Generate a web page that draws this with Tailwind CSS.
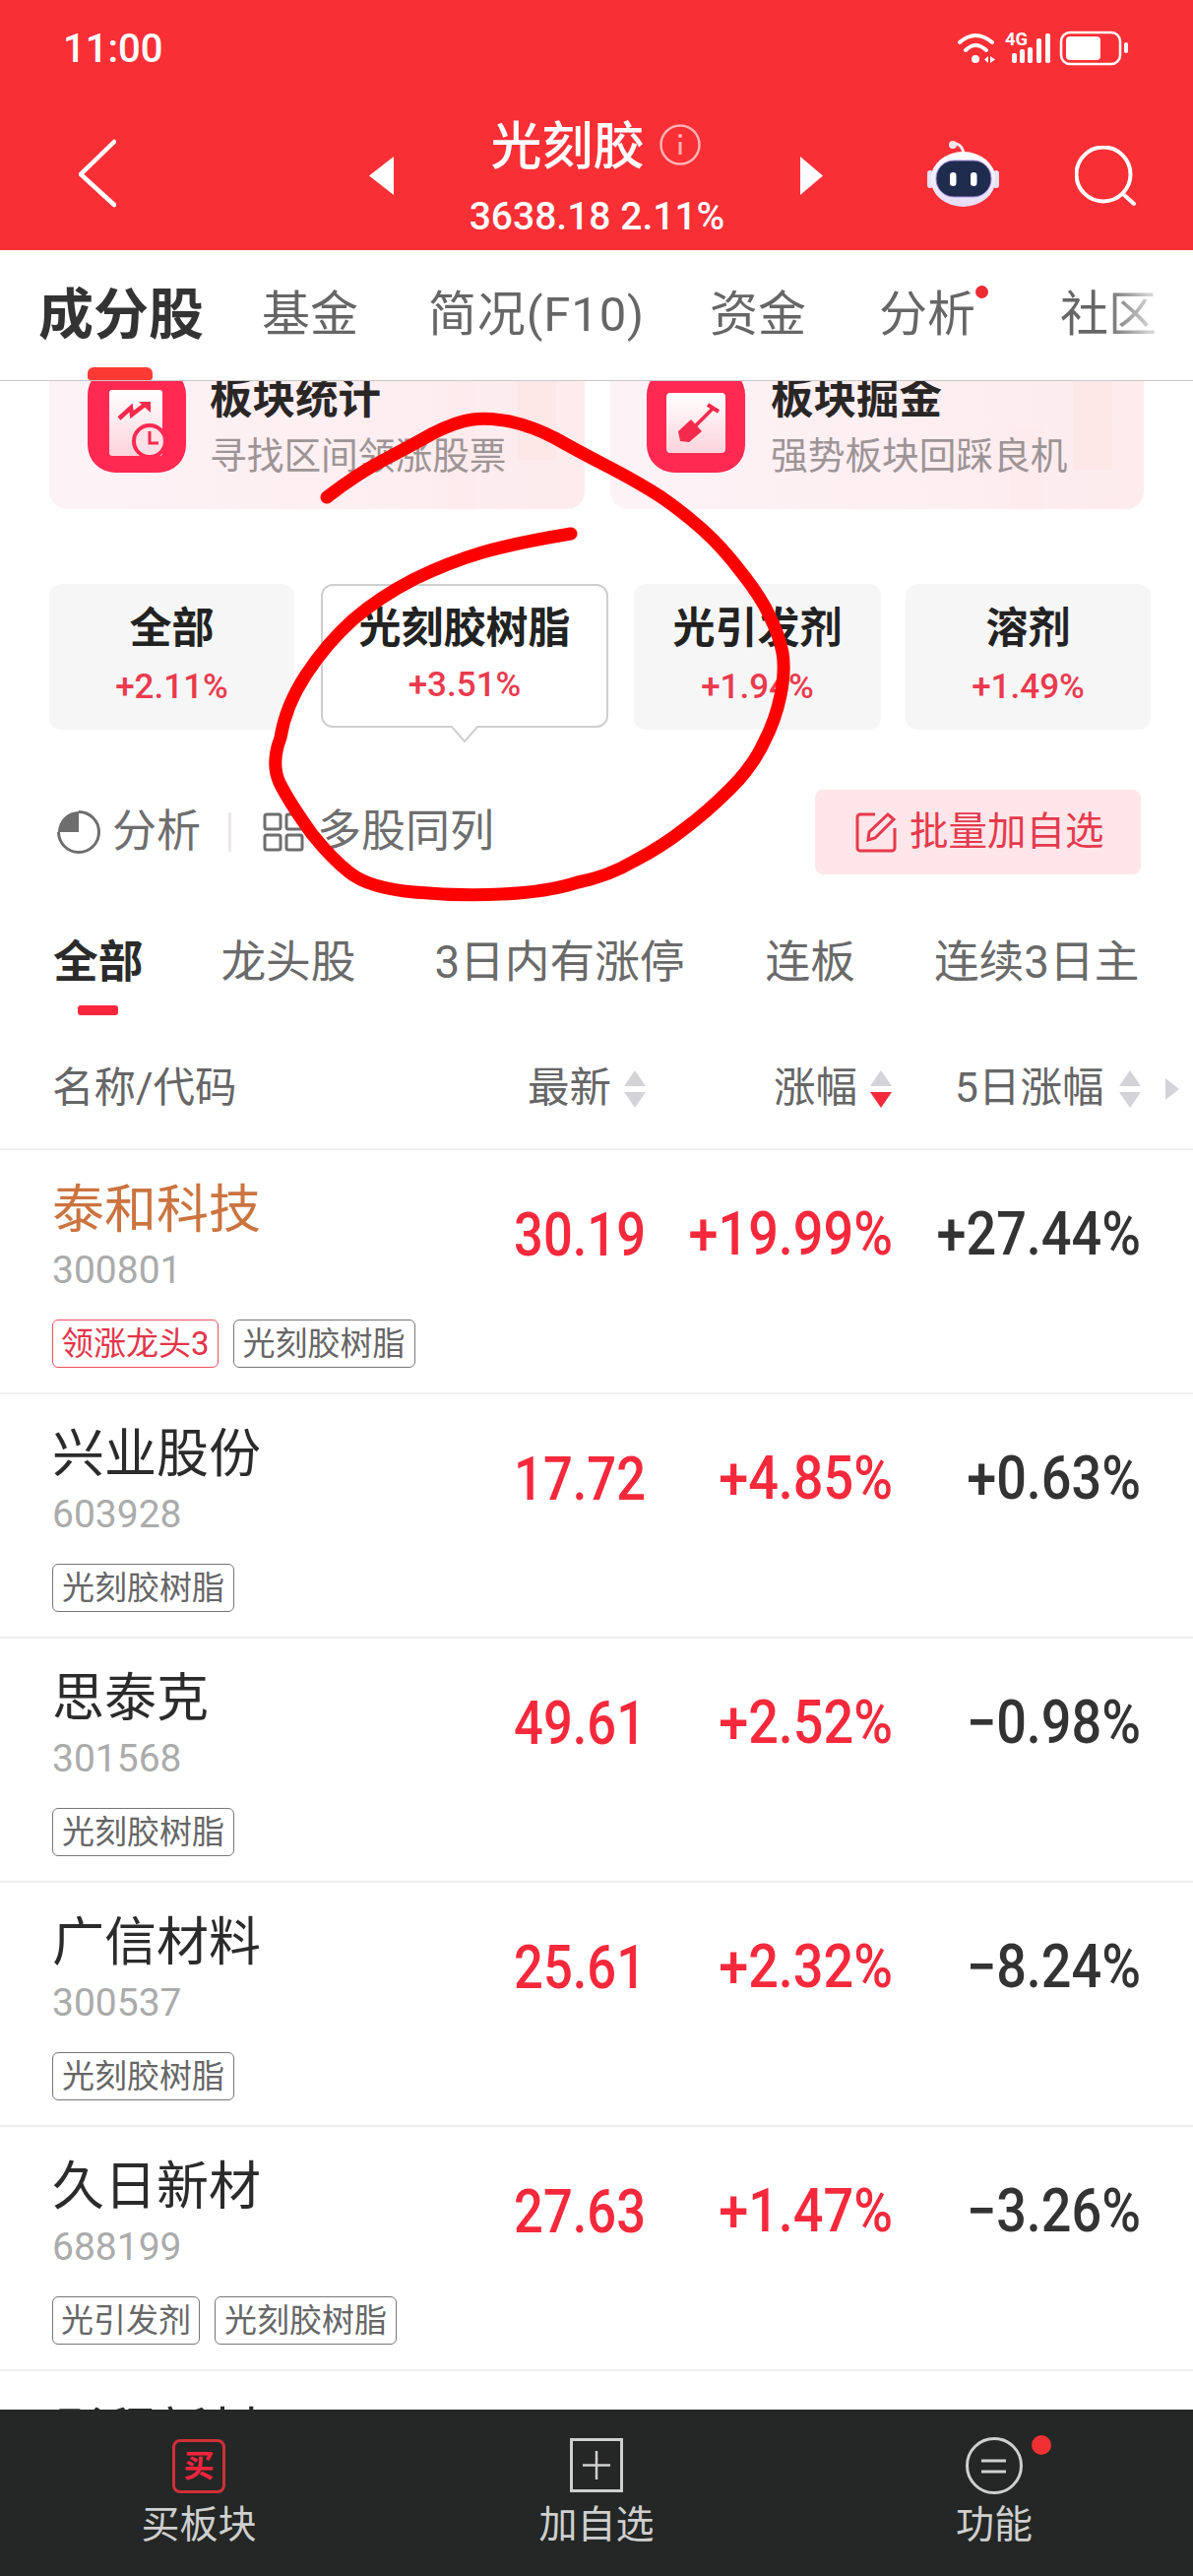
<!DOCTYPE html>
<html lang="zh-CN">
<head>
<meta charset="utf-8">
<script src="https://cdn.jsdelivr.net/npm/@tailwindcss/browser@4"></script>
<title>光刻胶</title>
</head>
<body>
<div class="relative w-[1212px] h-[2616px] overflow-hidden bg-white flex flex-col font-['Roboto','Noto_Sans_CJK_SC',sans-serif]">

  <!-- red header -->
  <header class="h-[254px] shrink-0 bg-[#f92f36] text-white">
    <div class="h-[100px] flex items-center pl-[64px]">
      <span class="text-[40px] font-medium leading-none">11:00</span>
      <svg class="ml-auto mr-[66px]" width="174" height="40" viewBox="0 0 174 40" fill="none">
        <path d="M3 13Q19 -1 36 13" stroke="#fff" stroke-width="4" stroke-linecap="round"/>
        <path d="M9 21Q19 11 30 21" stroke="#fff" stroke-width="4" stroke-linecap="round"/>
        <circle cx="19" cy="30" r="4" fill="#fff"/>
        <path d="M32 27v7l-4-3.500zM34 27v7l5-3.500z" fill="#fff"/>
        <text x="49" y="16" fill="#fff" font-size="18" font-weight="700" textLength="23" lengthAdjust="spacingAndGlyphs">4G</text>
        <rect x="56" y="24" width="5" height="10" rx="2" fill="#fff"/>
        <rect x="64" y="20" width="5" height="14" rx="2" fill="#fff"/>
        <rect x="72" y="18" width="5" height="16" rx="2" fill="#fff"/>
        <rect x="81" y="9" width="5" height="25" rx="2" fill="#fff"/>
        <rect x="90" y="4" width="5" height="30" rx="2" fill="#fff"/>
        <rect x="106" y="3" width="60" height="32" rx="9" stroke="#fff" stroke-width="2.500"/>
        <rect x="111" y="7" width="35" height="24" rx="4" fill="#fff"/>
        <rect x="170" y="13" width="4" height="11" rx="2" fill="#fff"/>
      </svg>
    </div>
    <div class="h-[154px] flex pl-[80px]">
      <svg class="mt-[41px]" width="38" height="70" viewBox="0 0 38 70" fill="none"><path d="M36 3L2 36L36 67" stroke="#fff" stroke-width="4.500" stroke-linecap="round" stroke-linejoin="miter"/></svg>
      <svg class="ml-[257px] mt-[59px]" width="25" height="39" viewBox="0 0 25 39"><path d="M0 19.500L25 0V39z" fill="#fff"/></svg>
      <div class="w-[413px] flex flex-col items-center">
        <div class="mt-[20px] h-[60px] flex items-center -ml-[3px]">
          <span class="text-[52px] leading-[60px] font-medium">光刻胶</span>
          <svg class="ml-[15px] -mt-[6px]" width="42" height="42" viewBox="0 0 42 42" fill="none">
            <circle cx="21" cy="21" r="19.500" stroke="#fdb3b5" stroke-width="2.500"/>
            <circle cx="21" cy="12" r="2" fill="#fdb3b5"/>
            <path d="M21 18v13" stroke="#fdb3b5" stroke-width="3"/>
          </svg>
        </div>
        <div class="mt-[18px] text-[39px] leading-[44px] font-medium">3638.18 2.11%</div>
      </div>
      <svg class="mt-[59px]" width="23" height="39" viewBox="0 0 23 39"><path d="M23 19.500L0 0V39z" fill="#fff"/></svg>
      <svg class="ml-[106px] mt-[43px]" width="73" height="67" viewBox="0 0 73 67" fill="none">
        <defs>
          <linearGradient id="rb" x1="0" y1="0" x2="0" y2="1"><stop offset="0" stop-color="#ffffff"/><stop offset="1" stop-color="#e6dcf5"/></linearGradient>
        </defs>
        <path d="M26 3C32 2 36 6 37 13" stroke="#f3e9ee" stroke-width="3"/>
        <circle cx="26" cy="4" r="4" fill="#f8e6e8"/>
        <rect x="0" y="30" width="6" height="18" rx="3" fill="#e6e1f3"/>
        <rect x="67" y="30" width="6" height="18" rx="3" fill="#e6e1f3"/>
        <ellipse cx="36.500" cy="39" rx="33" ry="28" fill="url(#rb)"/>
        <rect x="9" y="20" width="56" height="37" rx="18" fill="#1f2c4e" stroke="#a78bde" stroke-width="1"/>
        <rect x="23" y="32" width="6.500" height="14" rx="3.200" fill="#fff"/>
        <rect x="44" y="32" width="6.500" height="14" rx="3.200" fill="#fff"/>
      </svg>
      <svg class="ml-[77px] mt-[48px]" width="62" height="62" viewBox="0 0 62 62" fill="none">
        <circle cx="29" cy="29" r="27.500" stroke="#fff" stroke-width="4"/>
        <path d="M49 49L60 59" stroke="#fff" stroke-width="4" stroke-linecap="round"/>
      </svg>
    </div>
  </header>

  <!-- tabs -->
  <nav class="relative h-[133px] shrink-0 flex items-center border-b border-[#c9c6c6] pl-[39px] text-[49px] leading-[60px] text-[#666666] z-10 bg-white">
    <span class="text-[56px] font-bold text-[#333333]">成分股</span>
    <span class="ml-[59px]">基金</span>
    <span class="ml-[71px] tracking-[0.85px]">简况(F10)</span>
    <span class="ml-[66px]">资金</span>
    <span class="relative ml-[74px]">分析<i class="absolute -right-[13px] top-[0px] w-[13px] h-[13px] rounded-full bg-[#ee2c35]"></i></span>
    <span class="ml-[86px]">社区</span>
    <div class="absolute right-0 top-0 bottom-0 w-[90px] bg-gradient-to-r from-white/0 via-white/70 to-white"></div>
    <div class="absolute left-[89px] bottom-0 w-[66px] h-[13px] rounded-t-[6px] rounded-b-[3px] bg-[#fb3a33]"></div>
  </nav>

  <!-- scrolling content -->
  <main class="flex-1 overflow-hidden">
    <div class="flex gap-[26px] pl-[50px]">
      <div class="relative w-[544px] h-[130px] overflow-hidden rounded-b-[18px] bg-gradient-to-r from-[#fdf3f7] to-[#fdebed] flex pl-[39px]">
        <div class="absolute left-[405px] top-0 w-[28px] h-[130px] bg-[#feeaeb]/60"></div>
        <div class="absolute left-[475px] top-0 w-[40px] h-[80px] bg-[#fde4e2]/60"></div>
        <svg class="relative shrink-0 -mt-[14px]" width="100" height="107" viewBox="0 0 100 107" fill="none">
          <defs>
            <linearGradient id="i1" x1="0" y1="0" x2="0" y2="1"><stop offset="0" stop-color="#ffffff"/><stop offset="1" stop-color="#fcd3dc"/></linearGradient>
          </defs>
          <rect width="100" height="107" rx="28" fill="#ff2952"/>
          <rect x="22" y="23" width="54" height="67" rx="3" fill="url(#i1)"/>
          <path d="M32 52L44 41L45 48L58 38" stroke="#f42a4c" stroke-width="4.500"/>
          <path d="M52 35H64V46z" fill="#f42a4c"/>
          <circle cx="63" cy="75" r="16" fill="#fde1e6" stroke="#ff2952" stroke-width="4"/>
          <path d="M63 65V77H72" stroke="#f42a4c" stroke-width="3"/>
        </svg>
        <div class="relative ml-[24px] -mt-[6px] flex flex-col">
          <span class="text-[43.5px] leading-[50px] font-bold text-[#2a2626]">板块统计</span>
          <span class="mt-[10px] text-[37.7px] leading-[44px] text-[#9d9496]">寻找区间领涨股票</span>
        </div>
      </div>
      <div class="relative w-[542px] h-[130px] overflow-hidden rounded-b-[18px] bg-gradient-to-r from-[#fdf3f7] to-[#fdebed] flex pl-[37px]">
        <div class="absolute left-[406px] top-[46px] w-[34px] h-[84px] bg-[#feeaeb]/60"></div>
        <div class="absolute left-[470px] top-0 w-[40px] h-[90px] bg-[#fde4e2]/60"></div>
        <svg class="relative shrink-0 -mt-[14px]" width="100" height="107" viewBox="0 0 100 107" fill="none">
          <defs>
            <linearGradient id="i2" x1="0" y1="0" x2="0" y2="1"><stop offset="0" stop-color="#ffffff"/><stop offset="1" stop-color="#fcd3dc"/></linearGradient>
          </defs>
          <rect width="100" height="107" rx="28" fill="#ff2952"/>
          <rect x="20" y="26" width="60" height="61" rx="4" fill="url(#i2)"/>
          <path d="M47 62L68 41" stroke="#f42a4c" stroke-width="3.500"/>
          <path d="M62 38L73 45" stroke="#f42a4c" stroke-width="4"/>
          <path d="M32 65L45 53L56 65L43 76L34 75z" fill="#f42a4c"/>
        </svg>
        <div class="relative ml-[26px] -mt-[6px] flex flex-col">
          <span class="text-[43.5px] leading-[50px] font-bold text-[#2a2626]">板块掘金</span>
          <span class="mt-[10px] text-[37.7px] leading-[44px] text-[#9d9496]">强势板块回踩良机</span>
        </div>
      </div>
    </div>

    <!-- chips -->
    <div class="flex pl-[50px] mt-[76px]">
      <div class="w-[249px] h-[148px] rounded-[12px] bg-[#f6f6f6] flex flex-col items-center pt-[19px]">
        <span class="text-[43px] leading-[52px] font-bold text-[#222222]">全部</span>
        <span class="mt-[14px] text-[35px] leading-[40px] font-medium text-[#ea3a4e]">+2.11%</span>
      </div>
      <div class="relative ml-[27px] w-[292px] h-[146px] rounded-[12px] bg-white border-2 border-[#cfcfcf] flex flex-col items-center pt-[17px]">
        <span class="text-[43px] leading-[52px] font-bold text-[#222222]">光刻胶树脂</span>
        <span class="mt-[12px] text-[35px] leading-[40px] font-medium text-[#ea3a4e]">+3.51%</span>
        <svg class="absolute left-[130px] -bottom-[17px]" width="28" height="17" viewBox="0 0 28 17" fill="none"><path d="M0 0L14 16L28 0" fill="#fff" stroke="#cfcfcf" stroke-width="2"/></svg>
      </div>
      <div class="ml-[26px] w-[251px] h-[148px] rounded-[12px] bg-[#f6f6f6] flex flex-col items-center pt-[19px]">
        <span class="text-[43px] leading-[52px] font-bold text-[#222222]">光引发剂</span>
        <span class="mt-[14px] text-[35px] leading-[40px] font-medium text-[#ea3a4e]">+1.94%</span>
      </div>
      <div class="ml-[25px] w-[249px] h-[148px] rounded-[12px] bg-[#f6f6f6] flex flex-col items-center pt-[19px]">
        <span class="text-[43px] leading-[52px] font-bold text-[#222222]">溶剂</span>
        <span class="mt-[14px] text-[35px] leading-[40px] font-medium text-[#ea3a4e]">+1.49%</span>
      </div>
    </div>

    <!-- tools -->
    <div class="flex items-center mt-[61px] pl-[58px] h-[86px] text-[45px] text-[#6e6e6e]">
      <svg class="shrink-0" width="44" height="44" viewBox="0 0 44 44" fill="none">
        <path d="M22 1.500A20.500 20.500 0 1 1 1.500 22" stroke="#6e6e6e" stroke-width="3"/>
        <path d="M22 1V22H1A21 21 0 0 1 22 1z" fill="#6e6e6e"/>
      </svg>
      <span class="ml-[12px] leading-[56px] w-[90px]">分析</span>
      <i class="ml-[28px] w-[3px] h-[40px] bg-[#ebe7e7]"></i>
      <svg class="shrink-0 ml-[32px]" width="42" height="40" viewBox="0 0 42 40" fill="none" stroke="#6e6e6e" stroke-width="3">
        <rect x="2" y="2" width="16" height="15" rx="2"/>
        <rect x="24" y="2" width="16" height="15" rx="2"/>
        <rect x="2" y="23" width="16" height="15" rx="2"/>
        <rect x="24" y="23" width="16" height="15" rx="2"/>
      </svg>
      <span class="ml-[13px] leading-[56px] w-[180px]">多股同列</span>
      <div class="ml-[326px] w-[331px] h-[86px] rounded-[8px] bg-[#fee6ea] flex items-center pl-[41px] text-[#e63a4c]">
        <svg width="42" height="42" viewBox="0 0 42 42" fill="none" stroke="#e63a4c" stroke-width="3">
          <path d="M20 3H5a3 3 0 0 0-3 3V37a3 3 0 0 0 3 3H37a3 3 0 0 0 3-3V17"/>
          <path d="M13 29L14 21L33 3L39 8L20 27z"/>
        </svg>
        <span class="ml-[13px] text-[39.5px] leading-[50px]">批量加自选</span>
      </div>
    </div>

    <!-- sub tabs -->
    <div class="flex mt-[60px] pl-[54px] text-[45.7px] leading-[60px] text-[#6a6a6a]">
      <span class="font-bold text-[#2b2b2b]">全部</span>
      <span class="ml-[79px]">龙头股</span>
      <span class="ml-[80px]">3日内有涨停</span>
      <span class="ml-[82px]">连板</span>
      <span class="ml-[80px] whitespace-nowrap">连续3日主</span>
    </div>
    <div class="ml-[79px] mt-[13px] w-[41px] h-[10px] rounded-[3px] bg-[#f9263c]"></div>

    <!-- list head -->
    <div class="h-[137px] border-b-2 border-[#eeeeee] flex pt-[50px] pl-[53px] text-[42.5px] leading-[48px] text-[#666666]">
      <span class="w-[483px]">名称/代码</span>
      <span class="w-[98px]">最新</span>
      <svg width="22" height="38" viewBox="0 0 22 38" class="mt-[6px]"><path d="M11 0L22 16H0z" fill="#d4d4d8"/><path d="M0 22H22L11 38z" fill="#d4d4d8"/></svg>
      <span class="ml-[130px] w-[98px]">涨幅</span>
      <svg width="22" height="38" viewBox="0 0 22 38" class="mt-[6px]"><path d="M11 0L22 16H0z" fill="#d4d4d8"/><path d="M0 22H22L11 38z" fill="#f5293b"/></svg>
      <span class="ml-[64px] w-[167px]">5日涨幅</span>
      <svg width="22" height="38" viewBox="0 0 22 38" class="mt-[6px]"><path d="M11 0L22 16H0z" fill="#d4d4d8"/><path d="M0 22H22L11 38z" fill="#d4d4d8"/></svg>
      <svg width="14" height="22" viewBox="0 0 14 22" class="ml-[25px] mt-[14px]"><path d="M0 0L14 11L0 22z" fill="#d4d4d8"/></svg>
    </div>

    <!-- rows -->
    <div class="h-[248px] border-b-2 border-[#eeeeee] flex pl-[53px] pr-[53px]">
      <div class="flex-1 pt-[31px]">
        <div class="text-[53px] leading-[60px] text-[#cb7440]">泰和科技</div>
        <div class="mt-[11px] text-[39px] leading-[40px] text-[#ababab]">300801</div>
        <div class="mt-[30px] flex gap-[15px] text-[33px] leading-[47px]">
          <span class="h-[49px] px-[8px] border border-[#e9505f] rounded-[6px] text-[#e4344a] whitespace-nowrap">领涨龙头3</span>
          <span class="h-[49px] px-[9px] border border-[#777777] rounded-[6px] text-[#666666] whitespace-nowrap">光刻胶树脂</span>
        </div>
      </div>
      <div class="w-[150px] self-start mt-[56px] text-right text-[52.5px] leading-[60px] font-medium text-[#f5293b] scale-y-[1.15]">30.19</div>
      <div class="w-[251px] self-start mt-[56px] text-right text-[54px] leading-[60px] font-medium text-[#f5293b] scale-y-[1.12]">+19.99%</div>
      <div class="w-[252px] self-start mt-[56px] text-right text-[54px] leading-[60px] font-medium text-[#333333] scale-y-[1.12]">+27.44%</div>
    </div>
    <div class="h-[248px] border-b-2 border-[#eeeeee] flex pl-[53px] pr-[53px]">
      <div class="flex-1 pt-[31px]">
        <div class="text-[53px] leading-[60px] text-[#2b2b2b]">兴业股份</div>
        <div class="mt-[11px] text-[39px] leading-[40px] text-[#ababab]">603928</div>
        <div class="mt-[30px] flex gap-[15px] text-[33px] leading-[47px]">
          <span class="h-[49px] px-[9px] border border-[#777777] rounded-[6px] text-[#666666] whitespace-nowrap">光刻胶树脂</span>
        </div>
      </div>
      <div class="w-[150px] self-start mt-[56px] text-right text-[52.5px] leading-[60px] font-medium text-[#f5293b] scale-y-[1.15]">17.72</div>
      <div class="w-[251px] self-start mt-[56px] text-right text-[54px] leading-[60px] font-medium text-[#f5293b] scale-y-[1.12]">+4.85%</div>
      <div class="w-[252px] self-start mt-[56px] text-right text-[54px] leading-[60px] font-medium text-[#333333] scale-y-[1.12]">+0.63%</div>
    </div>
    <div class="h-[248px] border-b-2 border-[#eeeeee] flex pl-[53px] pr-[53px]">
      <div class="flex-1 pt-[31px]">
        <div class="text-[53px] leading-[60px] text-[#2b2b2b]">思泰克</div>
        <div class="mt-[11px] text-[39px] leading-[40px] text-[#ababab]">301568</div>
        <div class="mt-[30px] flex gap-[15px] text-[33px] leading-[47px]">
          <span class="h-[49px] px-[9px] border border-[#777777] rounded-[6px] text-[#666666] whitespace-nowrap">光刻胶树脂</span>
        </div>
      </div>
      <div class="w-[150px] self-start mt-[56px] text-right text-[52.5px] leading-[60px] font-medium text-[#f5293b] scale-y-[1.15]">49.61</div>
      <div class="w-[251px] self-start mt-[56px] text-right text-[54px] leading-[60px] font-medium text-[#f5293b] scale-y-[1.12]">+2.52%</div>
      <div class="w-[252px] self-start mt-[56px] text-right text-[54px] leading-[60px] font-medium text-[#333333] scale-y-[1.12]">−0.98%</div>
    </div>
    <div class="h-[248px] border-b-2 border-[#eeeeee] flex pl-[53px] pr-[53px]">
      <div class="flex-1 pt-[31px]">
        <div class="text-[53px] leading-[60px] text-[#2b2b2b]">广信材料</div>
        <div class="mt-[11px] text-[39px] leading-[40px] text-[#ababab]">300537</div>
        <div class="mt-[30px] flex gap-[15px] text-[33px] leading-[47px]">
          <span class="h-[49px] px-[9px] border border-[#777777] rounded-[6px] text-[#666666] whitespace-nowrap">光刻胶树脂</span>
        </div>
      </div>
      <div class="w-[150px] self-start mt-[56px] text-right text-[52.5px] leading-[60px] font-medium text-[#f5293b] scale-y-[1.15]">25.61</div>
      <div class="w-[251px] self-start mt-[56px] text-right text-[54px] leading-[60px] font-medium text-[#f5293b] scale-y-[1.12]">+2.32%</div>
      <div class="w-[252px] self-start mt-[56px] text-right text-[54px] leading-[60px] font-medium text-[#333333] scale-y-[1.12]">−8.24%</div>
    </div>
    <div class="h-[248px] border-b-2 border-[#eeeeee] flex pl-[53px] pr-[53px]">
      <div class="flex-1 pt-[31px]">
        <div class="text-[53px] leading-[60px] text-[#2b2b2b]">久日新材</div>
        <div class="mt-[11px] text-[39px] leading-[40px] text-[#ababab]">688199</div>
        <div class="mt-[30px] flex gap-[15px] text-[33px] leading-[47px]">
          <span class="h-[49px] px-[8px] border border-[#777777] rounded-[6px] text-[#666666] whitespace-nowrap">光引发剂</span>
          <span class="h-[49px] px-[9px] border border-[#777777] rounded-[6px] text-[#666666] whitespace-nowrap">光刻胶树脂</span>
        </div>
      </div>
      <div class="w-[150px] self-start mt-[56px] text-right text-[52.5px] leading-[60px] font-medium text-[#f5293b] scale-y-[1.15]">27.63</div>
      <div class="w-[251px] self-start mt-[56px] text-right text-[54px] leading-[60px] font-medium text-[#f5293b] scale-y-[1.12]">+1.47%</div>
      <div class="w-[252px] self-start mt-[56px] text-right text-[54px] leading-[60px] font-medium text-[#333333] scale-y-[1.12]">−3.26%</div>
    </div>
    <div class="h-[248px] pl-[53px] pt-[33px]">
      <div class="text-[53px] leading-[60px] text-[#2b2b2b]">彤程新材</div>
    </div>
  </main>

  <!-- bottom bar -->
  <footer class="relative z-10 h-[169px] shrink-0 bg-[#242725] grid grid-cols-3 text-[#cfcfcf] text-[39px] leading-[44px]">
    <div class="flex flex-col items-center pt-[30px]">
      <div class="w-[54px] h-[55px] rounded-[8px] border-[3px] border-[#cf3038] flex items-center justify-center text-[31px] leading-none font-bold text-[#f0243c]">买</div>
      <span class="mt-[10px]">买板块</span>
    </div>
    <div class="flex flex-col items-center pt-[29px]">
      <svg width="54" height="55" viewBox="0 0 54 55" fill="none" stroke="#cfcfcf">
        <rect x="1.500" y="1.500" width="51" height="52" stroke-width="3"/>
        <path d="M13 27.500H41M27 13V42" stroke-width="2.500"/>
      </svg>
      <span class="mt-[11px]">加自选</span>
    </div>
    <div class="relative flex flex-col items-center pt-[28px]">
      <svg width="58" height="58" viewBox="0 0 58 58" fill="none" stroke="#cfcfcf">
        <circle cx="29" cy="29" r="27.500" stroke-width="3"/>
        <path d="M16 24H41M16 35H41" stroke-width="3"/>
      </svg>
      <span class="mt-[9px]">功能</span>
      <i class="absolute left-[240px] top-[26px] w-[20px] h-[20px] rounded-full bg-[#ee3033]"></i>
    </div>
  </footer>

  <!-- hand-drawn red annotation -->
  <svg class="absolute inset-0 pointer-events-none z-20" width="1212" height="2616" viewBox="0 0 1212 2616" fill="none">
    <path d="M332 505Q363 481 390 467Q417 453 440 440Q464 428 480 426Q495 424 518 428Q541 433 564 445Q587 458 618 474Q649 490 672 505Q695 521 714 538Q734 556 753 581Q773 606 782 626Q792 646 795 663Q798 681 793 706Q788 731 776 754Q765 778 742 801Q719 824 695 842Q672 860 645 874Q618 890 587 896Q556 906 510 908Q464 910 421 906Q375 902 355 886Q337 872 317 847Q294 815 284 795Q275 775 285 749Q290 717 311 685Q332 653 359 629Q386 606 421 588Q456 571 490 561Q525 551 580 542" stroke="#ff0000" stroke-width="13" stroke-linecap="round" stroke-linejoin="round"/>
  </svg>
</div>
</body>
</html>
